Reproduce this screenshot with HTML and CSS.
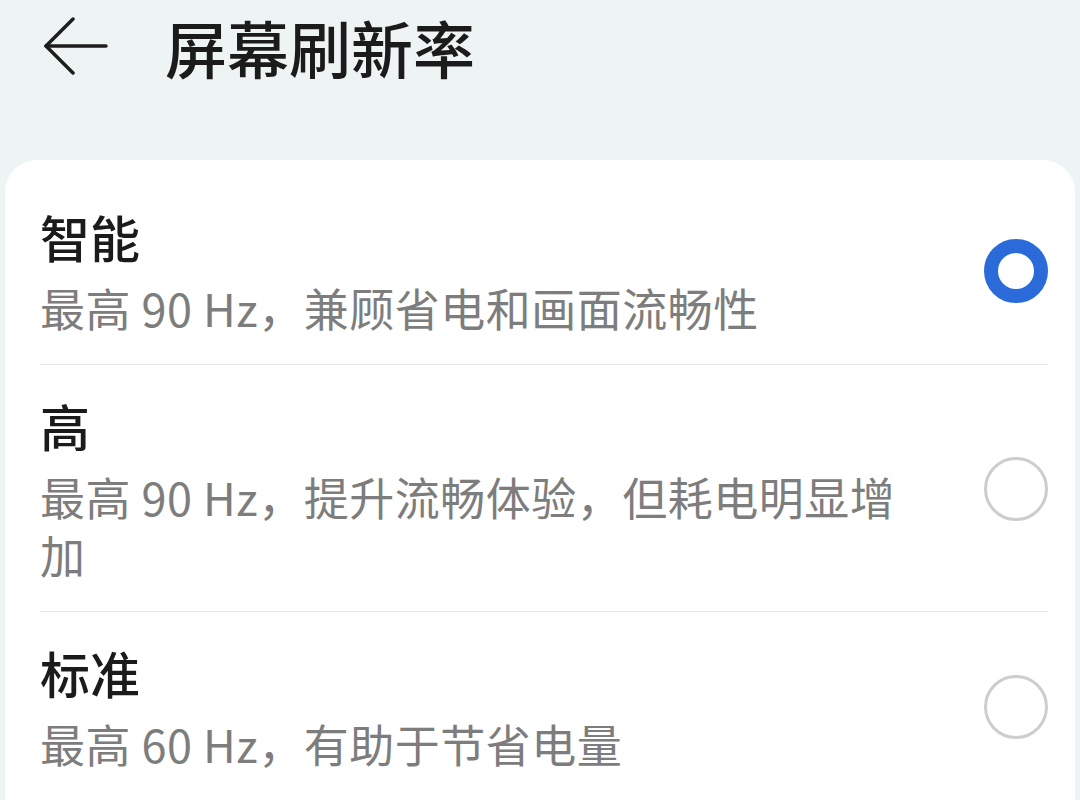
FILE: index.html
```html
<!DOCTYPE html>
<html lang="zh-CN">
<head>
    <meta charset="UTF-8">
    <meta name="viewport" content="width=device-width, initial-scale=1.0">
    <title>屏幕刷新率</title>
    <link rel="stylesheet" href="styles.css">
</head>
<body>
    <header class="top-bar">
        <svg class="back-icon" width="64" height="60" viewBox="0 0 64 60" fill="none" stroke="#1d1d1d" stroke-width="3.5" stroke-linecap="round" stroke-linejoin="round">
            <polyline points="29,2 2,29 29,56"/>
            <line x1="2" y1="29" x2="62" y2="29"/>
        </svg>
        <h1 class="page-title">屏幕刷新率</h1>
    </header>

    <div class="card">
        <div class="option">
            <div class="option-text">
                <div class="option-name">智能</div>
                <div class="option-desc">最高 90 Hz，兼顾省电和画面流畅性</div>
            </div>
            <span class="radio checked"></span>
        </div>
        <div class="option">
            <div class="option-text">
                <div class="option-name">高</div>
                <div class="option-desc">最高 90 Hz，提升流畅体验，但耗电明显增加</div>
            </div>
            <span class="radio"></span>
        </div>
        <div class="option">
            <div class="option-text">
                <div class="option-name">标准</div>
                <div class="option-desc">最高 60 Hz，有助于节省电量</div>
            </div>
            <span class="radio"></span>
        </div>
    </div>
</body>
</html>
```

FILE: styles.css
```css
body {
    margin: 0;
    background-color: #eef4f4;
    font-family: "Noto Sans CJK SC", "Noto Sans", sans-serif;
    color: #1b1b1b;
    overflow: hidden;
}
.top-bar {
    display: flex;
    align-items: center;
    height: 94px;
    padding-left: 44px;
}
.back-icon {
    flex-shrink: 0;
}
.page-title {
    margin: 0 0 0 57px;
    font-size: 62px;
    font-weight: 500;
    line-height: 94px;
}
.card {
    margin: 66px 5px 0 5px;
    padding: 16px 27px 0 35px;
    background-color: #fff;
    border-radius: 32px 32px 0 0;
}
.option {
    display: flex;
    align-items: center;
    padding: 28px 0 27px;
    border-bottom: 1px solid #e6e6e6;
}
.option-text {
    flex: 1;
}
.option-name {
    font-size: 50px;
    font-weight: 500;
    line-height: 64px;
    margin-bottom: 11px;
}
.option-desc {
    font-size: 45px;
    line-height: 58px;
    letter-spacing: 0.5px;
    color: #7d7d7d;
}
.radio {
    flex-shrink: 0;
    width: 64px;
    height: 64px;
    margin-left: 76px;
    box-sizing: border-box;
    border: 3px solid #cdcdcd;
    border-radius: 50%;
}
.radio.checked {
    border: 14px solid #2b6bd9;
}
```
